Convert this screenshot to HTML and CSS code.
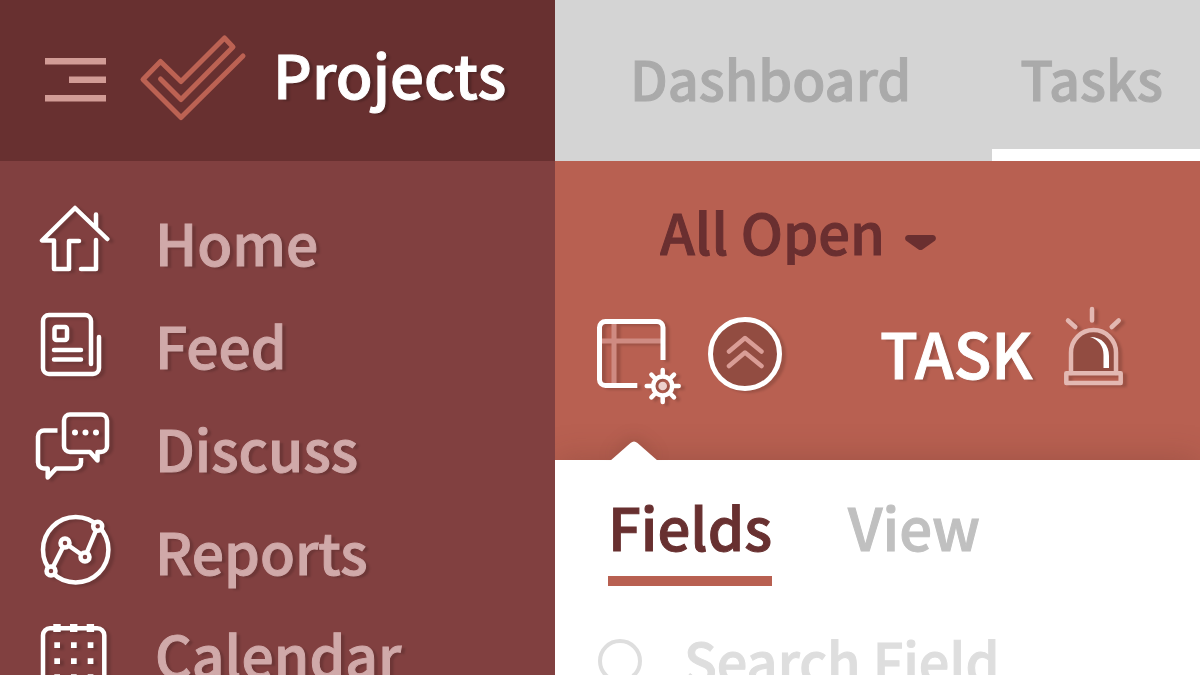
FILE: index.html
```
<!DOCTYPE html>
<html lang="en">
<head>
    <meta charset="UTF-8">
    <meta name="viewport" content="width=device-width, initial-scale=1.0">
    <title>Projects</title>
    <link rel="stylesheet" href="styles.css">
</head>
<body>
    <div class="app">
        <aside class="sidebar">
            <header class="brand">
                <button class="menu-btn" type="button" aria-label="Menu">
                    <svg width="61" height="46" viewBox="0 0 61 46" fill="#d29c96">
                        <path d="M0 0h61v6.500H0zM24 18.500h37V25H24zM0 37h61v6.500H0z"/>
                    </svg>
                </button>
                <svg class="logo" width="108" height="94" viewBox="0 0 108 94">
                    <path d="M21.500 45 42 65.500 94 13 85.500 4 42 47.500 21.500 27.500 4 45.500 42 83.500 104 22"/>
                </svg>
                <h1 class="title">Projects</h1>
            </header>
            <nav class="menu">
                <a class="menu-item" href="#home">
                    <svg class="icon" width="81" height="81" viewBox="0 0 81 81">
                        <path d="M75.300 40 43 9 10 41.500h12v28.500h15V42h10M64 41v29H49M64 15.500V28"/>
                    </svg>
                    <span>Home</span>
                </a>
                <a class="menu-item" href="#feed">
                    <svg class="icon" width="81" height="81" viewBox="0 0 81 81">
                        <path d="M59 62V19a6 6 0 0 0-6-6H17a6 6 0 0 0-6 6v47a6 6 0 0 0 6 6h44a6 6 0 0 0 6-6V35"/>
                        <rect x="22.500" y="25" width="12.500" height="13" rx="2"/>
                        <path d="M22 48h27M22 57.500h27"/>
                    </svg>
                    <span>Feed</span>
                </a>
                <a class="menu-item" href="#discuss">
                    <svg class="icon" width="81" height="81" viewBox="0 0 81 81">
                        <path d="M38 9.500h31a6 6 0 0 1 6 6V41a6 6 0 0 1-6 6h-3.500v8.500L58 47H38a6 6 0 0 1-6-6V15.500a6 6 0 0 1 6-6z"/>
                        <path stroke-linecap="butt" d="M25.500 25.500H12a6 6 0 0 0-6 6v26a6 6 0 0 0 6 6h3.700v9l8.300-9h19a6 6 0 0 0 6-6V53"/>
                        <g class="solid"><circle cx="43" cy="27.500" r="3"/><circle cx="53.500" cy="27.500" r="3"/><circle cx="64" cy="27.500" r="3"/></g>
                    </svg>
                    <span>Discuss</span>
                </a>
                <a class="menu-item" href="#reports">
                    <svg class="icon" width="81" height="81" viewBox="0 0 81 81">
                        <circle cx="43.700" cy="41.700" r="32.700"/>
                        <path d="M19 63l14-28 20 14 12.700-30.700"/>
                        <g class="nodes"><circle cx="19" cy="63" r="4.500"/><circle cx="33" cy="35" r="4.500"/><circle cx="53" cy="49" r="4.500"/><circle cx="65.700" cy="18.300" r="4.500"/></g>
                    </svg>
                    <span>Reports</span>
                </a>
                <a class="menu-item" href="#calendar">
                    <svg class="icon" width="81" height="81" viewBox="0 0 81 81">
                        <rect x="11" y="17.300" width="61.300" height="60" rx="7"/>
                        <path class="solid" d="M21.300 13h7.400v8h-7.400zM38 13h7.400v8H38zM54.700 13h7.400v8h-7.400z"/>
                        <path class="solid" d="M22.300 31.300H28V37h-5.700zM39 31.300h5.700V37H39zM55.700 31.300h5.700V37h-5.700zM22.300 47.300H28V53h-5.700zM39 47.300h5.700V53H39zM55.700 47.300h5.700V53h-5.700zM22.300 63.300H28V69h-5.700zM39 63.300h5.700V69H39zM55.700 63.300h5.700V69h-5.700z"/>
                    </svg>
                    <span>Calendar</span>
                </a>
            </nav>
        </aside>

        <main class="content">
            <nav class="tabs">
                <a class="tab" href="#dashboard">Dashboard</a>
                <a class="tab active" href="#tasks">Tasks</a>
            </nav>

            <section class="toolbar">
                <label class="filter">
                    <select aria-label="Task filter">
                        <option>All Open</option>
                        <option>Closed</option>
                    </select>
                    <svg width="31" height="16" viewBox="0 0 31 16" fill="#6a2f30">
                        <path d="M3.500 0h24c3.500 0 4.500 4 2 6L17.500 14.500q-2 1-4 0L1.500 6C-1 4 0 0 3.500 0z"/>
                    </svg>
                </label>
                <div class="tools">
                    <button class="tool" type="button" aria-label="Customize columns">
                        <svg class="icon" width="88" height="96" viewBox="0 0 88 96">
                            <path class="faint" d="M19 17v60M6 35h60"/>
                            <path stroke-linecap="butt" d="M42.300 79.500H10.500a6 6 0 0 1-6-6v-52a6 6 0 0 1 6-6H62a6 6 0 0 1 6 6V54"/>
                            <g class="gear">
                                <circle cx="67.700" cy="80" r="9.500"/>
                                <path d="M67.700 68v-4M67.700 92v4M55.700 80h-4M79.700 80h4M59.200 71.500l-2.800-2.800M76.200 71.500l2.800-2.800M59.200 88.500l-2.800 2.800M76.200 88.500l2.800 2.800"/>
                            </g>
                            <circle class="hub" cx="67.700" cy="80" r="4.300"/>
                        </svg>
                    </button>
                    <button class="tool" type="button" aria-label="Collapse all">
                        <svg class="icon" width="76" height="76" viewBox="0 0 76 76">
                            <circle class="disc" cx="38" cy="38" r="34.500"/>
                            <path class="chevrons" d="M22 35.500 38 22l16.500 13.500M22 50l16-13.500L54.500 50"/>
                        </svg>
                    </button>
                    <div class="task-col">
                        <span>TASK</span>
                        <svg class="icon siren" width="68" height="96" viewBox="0 0 68 96">
                            <path d="M31 3v11.500M7 14.500l7.300 6.500M57.700 14.500 50.700 21"/>
                            <path class="dome" d="M10 67V46.500a22.500 22.500 0 0 1 45 0V67"/>
                            <path class="shine" d="M29 31c12 0 19 8 19 19v12h-5.500V49c0-9-4.500-15-13.500-18z"/>
                            <rect x="5.300" y="67.300" width="54.400" height="9.700"/>
                        </svg>
                    </div>
                </div>
            </section>

            <section class="panel">
                <svg class="notch" width="48" height="20" viewBox="0 0 48 20" fill="#fff">
                    <path d="M0 20 20.500 2q3.500-3 7 0L48 20z"/>
                </svg>
                <div class="panel-tabs">
                    <a class="panel-tab active" href="#fields">Fields</a>
                    <a class="panel-tab" href="#view">View</a>
                </div>
                <label class="search">
                    <svg width="56" height="56" viewBox="0 0 56 56" fill="none" stroke="#dedede" stroke-width="4">
                        <circle cx="22" cy="22" r="20"/>
                        <path d="M36 36l16 16" stroke-linecap="round"/>
                    </svg>
                    <input type="text" placeholder="Search Field" aria-label="Search Field">
                </label>
            </section>
        </main>
    </div>
</body>
</html>
```
FILE: styles.css
```
* {
    box-sizing: border-box;
}

body {
    margin: 0;
    height: 100vh;
    overflow: hidden;
    font-family: "Noto Sans CJK SC", "Open Sans", sans-serif;
    font-size: 58px;
    font-weight: 500;
    line-height: 68px;
    -webkit-text-stroke: 1px;
}

a {
    color: inherit;
    text-decoration: none;
}

button {
    padding: 0;
    border: 0;
    background: none;
    cursor: pointer;
}

svg {
    display: block;
    flex: none;
}

.app {
    display: grid;
    grid-template-columns: 46.25% 1fr;
    height: 100%;
}

/* Shared icon look */
.icon {
    fill: none;
    stroke: #fff;
    stroke-width: 4.5;
    stroke-linecap: round;
    stroke-linejoin: round;
    overflow: visible;
    filter: drop-shadow(4px 2px 1px rgba(0, 0, 0, 0.15));
}

.icon .solid {
    fill: #fff;
    stroke: none;
}

/* Sidebar */
.sidebar {
    background: #814040;
    overflow: hidden;
}

.brand {
    display: flex;
    align-items: center;
    height: 161px;
    padding-left: 45px;
    background: #683030;
}

.logo {
    margin-left: 33px;
    fill: none;
    stroke: #bc6253;
    stroke-width: 5;
    stroke-linecap: round;
    stroke-linejoin: round;
}

.title {
    margin: 0 0 0 26px;
    padding-bottom: 16px;
    color: #fff;
    font-size: 60px;
    font-weight: 500;
    text-shadow: 4px 2px 2px rgba(0, 0, 0, 0.2);
}

.menu {
    padding-top: 27px;
}

.menu-item {
    display: flex;
    align-items: center;
    gap: 42px;
    height: 103px;
    padding-left: 32px;
    color: #d0a9a9;
    font-size: 57px;
    text-shadow: 4px 2px 2px rgba(0, 0, 0, 0.15);
}

.menu-item span {
    padding-top: 3px;
}

.nodes {
    fill: #814040;
}

/* Top tabs */
.content {
    display: flex;
    flex-direction: column;
    min-width: 0;
    overflow: hidden;
}

.tabs {
    display: flex;
    flex: none;
    gap: 53px;
    height: 161px;
    padding-left: 47px;
    background: #d4d4d4;
    color: #aaa;
    font-size: 54px;
}

.tab {
    padding: 44px 28px 0;
    border-bottom: 12px solid transparent;
}

.tab.active {
    flex: 1;
    border-color: #fff;
}

/* Toolbar */
.toolbar {
    flex: none;
    height: 299px;
    padding-top: 36px;
    background: #b86051;
}

.filter {
    display: flex;
    align-items: center;
    gap: 20px;
    height: 68px;
    padding-left: 105px;
}

.filter select {
    appearance: none;
    padding: 0;
    border: 0;
    background: none;
    color: #6a2f30;
    font: inherit;
    font-size: 56px;
    -webkit-text-stroke: 1px;
}

.filter svg {
    margin-top: 24px;
}

.tools {
    display: flex;
    align-items: center;
    gap: 24px;
    margin-top: 41px;
    padding-left: 40px;
}

.tools .icon {
    stroke-width: 5;
}

.icon .faint {
    stroke: #cf8b82;
}

.icon .gear {
    stroke-width: 4.5;
}

.icon .hub {
    fill: #ecd0cc;
    stroke: none;
}

.icon .disc {
    fill: #924c41;
}

.icon .chevrons {
    stroke: #d99d96;
    stroke-width: 4.5;
}

.task-col {
    display: flex;
    align-items: center;
    gap: 28px;
    margin-left: 73px;
    color: #fff;
    font-size: 62px;
    text-shadow: 4px 2px 2px rgba(0, 0, 0, 0.15);
}

.task-col span {
    padding-bottom: 5px;
}

.tools .siren {
    stroke: #e3b8b2;
    stroke-width: 4.5;
}

.siren .dome {
    fill: #924c41;
}

.siren .shine {
    fill: #fff;
    stroke: none;
}

/* Fields panel */
.panel {
    position: relative;
    flex: 1;
    padding: 32px 0 0 43px;
    background: #fff;
    box-shadow: 0 0 32px rgba(80, 40, 30, 0.25);
}

.notch {
    position: absolute;
    top: -19px;
    left: 55px;
    filter: drop-shadow(0 -4px 8px rgba(80, 40, 30, 0.2));
    clip-path: inset(-30px -30px 0 -30px);
}

.panel-tabs {
    display: flex;
    gap: 76px;
    padding-left: 10px;
    color: #c0c0c0;
}

.panel-tab {
    height: 94px;
    border-bottom: 10px solid transparent;
}

.panel-tab.active {
    border-color: #b86051;
    color: #683030;
}

.search {
    display: flex;
    gap: 30px;
    margin-top: 37px;
}

.search svg {
    margin-top: 16px;
}

.search input {
    flex: 1;
    min-width: 0;
    height: 72px;
    padding: 0;
    border: 0;
    outline: 0;
    background: none;
    font: inherit;
    font-size: 54px;
    -webkit-text-stroke: 1px;
}

.search input::placeholder {
    color: #dedede;
    opacity: 1;
}
```
